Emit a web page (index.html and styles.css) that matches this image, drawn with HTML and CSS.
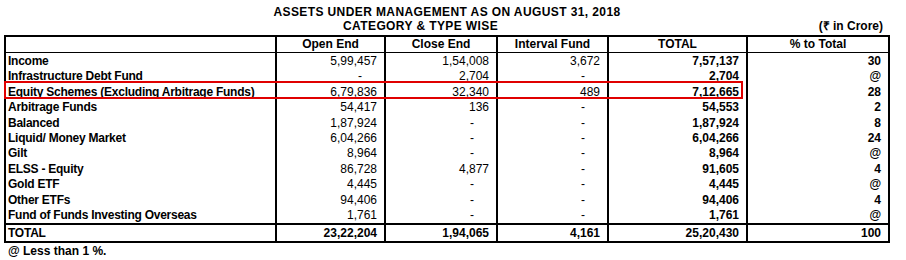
FILE: index.html
```html
<!DOCTYPE html>
<html lang="en">
<head>
    <meta charset="UTF-8">
    <meta name="viewport" content="width=device-width, initial-scale=1.0">
    <title>AUM - Category &amp; Type Wise</title>
    <link rel="stylesheet" href="styles.css">
</head>
<body>
    <div class="page">
        <div class="titulo">ASSETS UNDER MANAGEMENT AS ON AUGUST 31, 2018</div>
        <div class="sub">
            <span class="cat">CATEGORY &amp; TYPE WISE</span>
            <span class="unid">(&#8377; in Crore)</span>
        </div>

        <div class="caixa">
        <table class="aum">
            <colgroup>
                <col class="c1"><col class="c2"><col class="c3"><col class="c4"><col class="c5"><col class="c6">
            </colgroup>
            <thead>
                <tr>
                    <th></th>
                    <th>Open End</th>
                    <th>Close End</th>
                    <th>Interval Fund</th>
                    <th>TOTAL</th>
                    <th>% to Total</th>
                </tr>
            </thead>
            <tbody>
                <tr><td class="nome">Income</td><td>5,99,457</td><td>1,54,008</td><td>3,672</td><td class="b">7,57,137</td><td class="b">30</td></tr>
                <tr><td class="nome">Infrastructure Debt Fund</td><td><span class="nil">-</span></td><td>2,704</td><td><span class="nil">-</span></td><td class="b">2,704</td><td class="b at">@</td></tr>
                <tr><td class="nome">Equity Schemes (Excluding Arbitrage Funds)</td><td>6,79,836</td><td>32,340</td><td>489</td><td class="b">7,12,665</td><td class="b">28</td></tr>
                <tr><td class="nome">Arbitrage Funds</td><td>54,417</td><td>136</td><td><span class="nil">-</span></td><td class="b">54,553</td><td class="b">2</td></tr>
                <tr><td class="nome">Balanced</td><td>1,87,924</td><td><span class="nil">-</span></td><td><span class="nil">-</span></td><td class="b">1,87,924</td><td class="b">8</td></tr>
                <tr><td class="nome">Liquid/ Money Market</td><td>6,04,266</td><td><span class="nil">-</span></td><td><span class="nil">-</span></td><td class="b">6,04,266</td><td class="b">24</td></tr>
                <tr><td class="nome">Gilt</td><td>8,964</td><td><span class="nil">-</span></td><td><span class="nil">-</span></td><td class="b">8,964</td><td class="b at">@</td></tr>
                <tr><td class="nome">ELSS - Equity</td><td>86,728</td><td>4,877</td><td><span class="nil">-</span></td><td class="b">91,605</td><td class="b">4</td></tr>
                <tr><td class="nome">Gold ETF</td><td>4,445</td><td><span class="nil">-</span></td><td><span class="nil">-</span></td><td class="b">4,445</td><td class="b at">@</td></tr>
                <tr><td class="nome">Other ETFs</td><td>94,406</td><td><span class="nil">-</span></td><td><span class="nil">-</span></td><td class="b">94,406</td><td class="b">4</td></tr>
                <tr><td class="nome">Fund of Funds Investing Overseas</td><td>1,761</td><td><span class="nil">-</span></td><td><span class="nil">-</span></td><td class="b">1,761</td><td class="b at">@</td></tr>
            </tbody>
            <tfoot>
                <tr><td class="nome">TOTAL</td><td>23,22,204</td><td>1,94,065</td><td>4,161</td><td>25,20,430</td><td>100</td></tr>
            </tfoot>
        </table>
        <!-- destaque vermelho na linha de equity -->
        <div class="marca"></div>
        </div>

        <p class="nota">@ Less than 1 %.</p>
    </div>
</body>
</html>
```

FILE: styles.css
```css
body{
    margin: 0;
    background-color: white;
    font-family: "Liberation Sans", Arial, sans-serif;
    font-size: 12px;
    color: black;
}

.page{
    width: 884px;
    padding: 5px 0 0 4px;
}

.titulo{
    font-weight: bold;
    text-align: center;
    line-height: 14px;
    letter-spacing: 0.4px;
    padding-left: 2px;
}

.sub{
    display: flex;
    justify-content: space-between;
    font-weight: bold;
    line-height: 14px;
}

.cat{
    margin-left: 339px;
    letter-spacing: 0.4px;
}

.unid{
    margin-right: 5px;
}

.caixa{
    position: relative;
    margin-top: 2px;
}

.aum{
    border-collapse: collapse;
    table-layout: fixed;
    width: 884px;
    border: 2px solid black;
}

.c1{ width: 271px }
.c2{ width: 109px }
.c3{ width: 112px }
.c4{ width: 111px }
.c5{ width: 139px }
.c6{ width: 142px }

.aum th, .aum td{
    border-left: 2px solid black;
    border-right: 2px solid black;
    padding: 0 7px 0 2px;
    white-space: nowrap;
    overflow: hidden;
}

.aum th{
    height: 15px;
    line-height: 15px;
    text-align: center;
    font-weight: bold;
    border-bottom: 1px solid black;
    padding: 0;
}

.aum td{
    height: 15.4px;
    line-height: 15.4px;
    text-align: right;
}

.aum tbody tr:first-child td{
    padding-top: 1px;
}

.aum td.nome{
    text-align: left;
    font-weight: bold;
    letter-spacing: -0.25px;
}

.b{
    font-weight: bold;
}

.at{
    font-style: italic;
}

.nil{
    padding-right: 15px;
}

.aum tfoot td{
    border-top: 2px solid black;
    height: 16px;
    line-height: 16px;
    font-weight: bold;
}

.marca{
    position: absolute;
    left: 0;
    top: 46px;
    width: 735px;
    height: 14px;
    border: 2px solid #e00000;
}

.nota{
    margin: 1px 0 0 4px;
    font-weight: bold;
    line-height: 14px;
}
```
